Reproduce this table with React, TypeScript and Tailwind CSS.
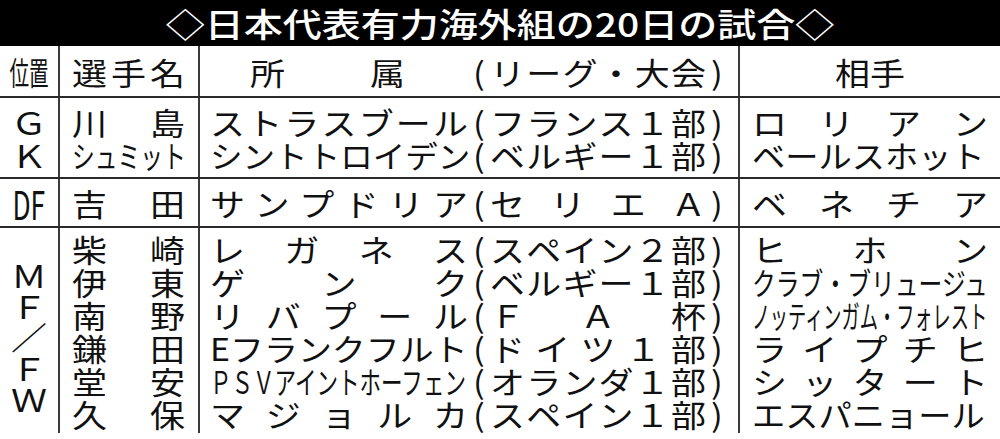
import type { ReactNode } from 'react';

// One text line of the table: 33px pitch, glyphs flattened a little like the print face.
const LINE = 'flex h-[33px] items-center leading-[33px] scale-y-[0.88] whitespace-nowrap';

interface Piece {
  t: string;
  sx?: string; // condensed text: a scale-x class, laid out from the left
}

interface Entry {
  name: Piece;
  club: Piece;
  league: Piece;
  opp: Piece;
}

function Fill({ p, className = '' }: { p: Piece; className?: string }) {
  if (p.sx) {
    return (
      <div className={className}>
        <span className={`inline-block origin-left ${p.sx}`}>{p.t}</span>
      </div>
    );
  }
  return (
    <div className={`flex justify-between ${className}`}>
      {Array.from(p.t).map((ch, i) => (
        <span key={i}>{ch}</span>
      ))}
    </div>
  );
}

function ClubLine({ club, league }: { club: ReactNode; league: ReactNode }) {
  return (
    <div className={LINE}>
      {club}
      <span className="w-[22px] text-center">(</span>
      {league}
      <span className="w-[22px] text-center">)</span>
    </div>
  );
}

const GK: Entry[] = [
  { name: { t: '川島' }, club: { t: 'ストラスブール' }, league: { t: 'フランス１部' }, opp: { t: 'ロリアン' } },
  {
    name: { t: 'シュミット', sx: 'scale-x-[0.65]' },
    club: { t: 'シントトロイデン', sx: 'scale-x-[0.93]' },
    league: { t: 'ベルギー１部' },
    opp: { t: 'ベールスホット', sx: 'scale-x-[0.95]' },
  },
];

const DF: Entry[] = [
  { name: { t: '吉田' }, club: { t: 'サンプドリア' }, league: { t: 'セリエＡ' }, opp: { t: 'ベネチア' } },
];

const MF: Entry[] = [
  { name: { t: '柴崎' }, club: { t: 'レガネス' }, league: { t: 'スペイン２部' }, opp: { t: 'ヒホン' } },
  {
    name: { t: '伊東' },
    club: { t: 'ゲンク' },
    league: { t: 'ベルギー１部' },
    opp: { t: 'クラブ・ブリュージュ', sx: 'scale-x-[0.68]' },
  },
  {
    name: { t: '南野' },
    club: { t: 'リバプール' },
    league: { t: 'ＦＡ杯' },
    opp: { t: 'ノッティンガム・フォレスト', sx: 'scale-x-[0.52]' },
  },
  {
    name: { t: '鎌田' },
    club: { t: 'Eフランクフルト', sx: 'scale-x-[0.97]' },
    league: { t: 'ドイツ１部' },
    opp: { t: 'ライプチヒ' },
  },
  {
    name: { t: '堂安' },
    club: { t: 'ＰＳＶアイントホーフェン', sx: 'scale-x-[0.615]' },
    league: { t: 'オランダ１部' },
    opp: { t: 'シッタート' },
  },
  {
    name: { t: '久保' },
    club: { t: 'マジョルカ' },
    league: { t: 'スペイン１部' },
    opp: { t: 'エスパニョール', sx: 'scale-x-[0.95]' },
  },
];

function Group({ pos, rows, last = false, height }: { pos: ReactNode; rows: Entry[]; last?: boolean; height: string }) {
  return (
    <div className={`flex ${height} ${last ? '' : 'border-b-2 border-[#2a2a2a]'}`}>
      <div className="flex w-[60px] shrink-0 flex-col items-center justify-center border-r-2 border-[#3a3a3a]">
        {pos}
      </div>
      <div className="flex w-[140px] shrink-0 flex-col justify-center border-r-2 border-[#3a3a3a] pl-[12px] pr-[13px]">
        {rows.map((r, i) => (
          <Fill key={i} p={r.name} className={LINE} />
        ))}
      </div>
      <div className="flex w-[540px] shrink-0 flex-col justify-center border-r-2 border-[#3a3a3a] pl-[10px]">
        {rows.map((r, i) => (
          <ClubLine
            key={i}
            club={<Fill p={r.club} className="w-[258px]" />}
            league={<Fill p={r.league} className="w-[216px]" />}
          />
        ))}
      </div>
      <div className="flex w-[260px] shrink-0 flex-col justify-center pl-[12px] pr-[12px]">
        {rows.map((r, i) => (
          <Fill key={i} p={r.opp} className={LINE} />
        ))}
      </div>
    </div>
  );
}

export default function App() {
  return (
    <div className="h-[439px] w-[1000px] overflow-hidden bg-white font-['Noto_Sans_CJK_JP',sans-serif] text-[#111]">
      {/* Title bar */}
      <div className="flex h-[46px] items-center justify-center bg-black text-[39px] font-medium leading-[46px] text-white">
        <span className="inline-block scale-y-[0.85] whitespace-nowrap">◇日本代表有力海外組の20日の試合◇</span>
      </div>

      <div className="text-[35px]">
        {/* Column headings */}
        <div className="flex h-[52px] border-b-2 border-[#2a2a2a]">
          <div className="flex w-[60px] shrink-0 items-center justify-center border-r-2 border-[#3a3a3a]">
            <span className="inline-block whitespace-nowrap scale-x-[0.56] scale-y-[0.9] leading-[33px]">位置</span>
          </div>
          <div className="flex w-[140px] shrink-0 flex-col justify-center border-r-2 border-[#3a3a3a] pl-[12px] pr-[13px]">
            <Fill p={{ t: '選手名' }} className={LINE} />
          </div>
          <div className="flex w-[540px] shrink-0 flex-col justify-center border-r-2 border-[#3a3a3a] pl-[10px]">
            <ClubLine
              club={
                <div className="flex w-[258px] gap-[85px] pl-[40px]">
                  <span>所</span>
                  <span>属</span>
                </div>
              }
              league={<Fill p={{ t: 'リーグ・大会' }} className="w-[216px]" />}
            />
          </div>
          <div className="flex w-[260px] shrink-0 items-center justify-center">
            <span className={LINE}>相手</span>
          </div>
        </div>

        <Group
          height="h-[81px]"
          rows={GK}
          pos={
            <div className="text-[36px]">
              <div className={`${LINE} justify-center`}>Ｇ</div>
              <div className={`${LINE} justify-center`}>Ｋ</div>
            </div>
          }
        />

        <Group
          height="h-[49px]"
          rows={DF}
          pos={<span className="inline-block scale-x-[0.66] whitespace-nowrap text-[40px] leading-[40px]">DF</span>}
        />

        <Group
          height="h-[205px]"
          rows={MF}
          last
          pos={
            <div className="pt-[12px] text-[36px]">
              {['Ｍ', 'Ｆ', '／', 'Ｆ', 'Ｗ'].map((ch, i) => (
                <div key={i} className="flex h-[31px] items-center justify-center leading-[31px] scale-y-[0.88]">
                  {ch}
                </div>
              ))}
            </div>
          }
        />
      </div>
    </div>
  );
}
